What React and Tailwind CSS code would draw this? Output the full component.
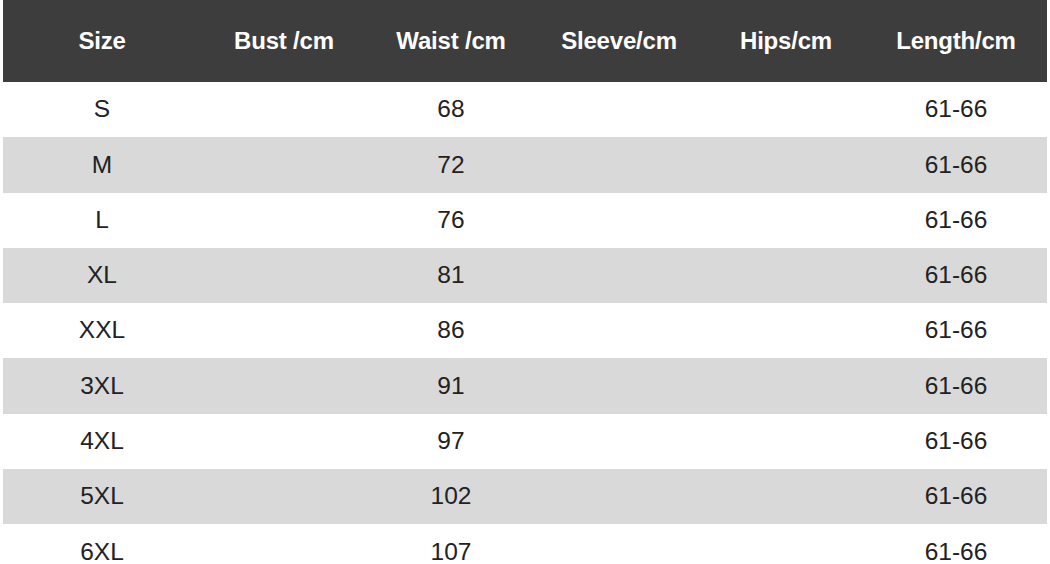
import React from "react";

const headers = ["Size", "Bust /cm", "Waist /cm", "Sleeve/cm", "Hips/cm", "Length/cm"];

const rows = [
  ["S", "68"],
  ["M", "72"],
  ["L", "76"],
  ["XL", "81"],
  ["XXL", "86"],
  ["3XL", "91"],
  ["4XL", "97"],
  ["5XL", "102"],
  ["6XL", "107"],
];

const cols = "grid grid-cols-[198px_166px_168px_168px_166px_174px]";

export default function App() {
  return (
    <div className="h-[564px] w-[1050px] overflow-hidden bg-white px-[3px] font-['Liberation_Sans',Arial,sans-serif]">
      {/* header */}
      <div className={`${cols} h-[82px] items-center bg-[#3d3d3d] text-[24px] font-bold text-white`}>
        {headers.map((h) => (
          <div key={h} className="text-center tracking-[-0.2px]">
            {h}
          </div>
        ))}
      </div>

      {/* body */}
      {rows.map(([size, waist], i) => (
        <div
          key={size}
          className={`${cols} h-[55.3px] items-center text-[24.5px] text-[#222] ${
            i % 2 === 1 ? "bg-[#d9d9d9]" : "bg-white"
          }`}
        >
          <div className="text-center">{size}</div>
          <div></div>
          <div className="text-center">{waist}</div>
          <div></div>
          <div></div>
          <div className="text-center">61-66</div>
        </div>
      ))}
    </div>
  );
}
